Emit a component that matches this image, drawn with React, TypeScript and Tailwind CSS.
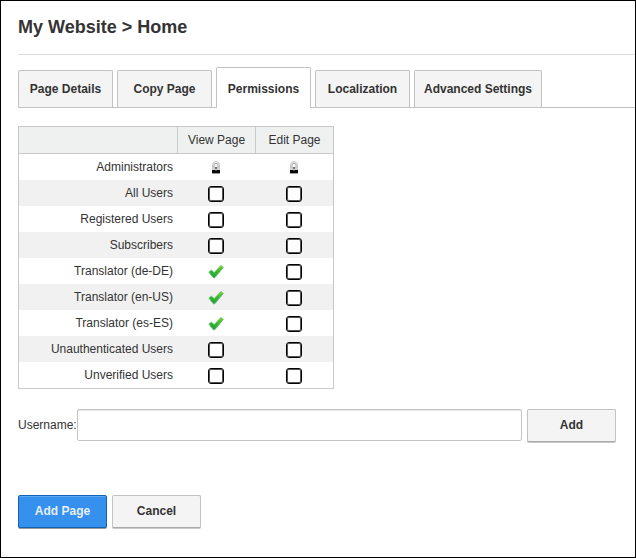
import { useState } from "react";

type Access = "locked" | "granted" | "open";

const tabs = ["Page Details", "Copy Page", "Permissions", "Localization", "Advanced Settings"];

const roles: { name: string; view: Access; edit: Access }[] = [
  { name: "Administrators", view: "locked", edit: "locked" },
  { name: "All Users", view: "open", edit: "open" },
  { name: "Registered Users", view: "open", edit: "open" },
  { name: "Subscribers", view: "open", edit: "open" },
  { name: "Translator (de-DE)", view: "granted", edit: "open" },
  { name: "Translator (en-US)", view: "granted", edit: "open" },
  { name: "Translator (es-ES)", view: "granted", edit: "open" },
  { name: "Unauthenticated Users", view: "open", edit: "open" },
  { name: "Unverified Users", view: "open", edit: "open" },
];

function LockIcon() {
  return (
    <svg role="img" aria-label="Locked" className="h-4 w-4" viewBox="0 0 16 16">
      <path d="M4.5 9V4.4Q5 1.6 8 1.6T11.5 4.4V9Z" fill="#e9e9e9" stroke="#c2c2c2" strokeWidth="0.8" />
      <path d="M6 8V5Q6.2 3.4 8 3.4T10 5V8Z" fill="#fff" stroke="#8d8d8d" strokeWidth="0.7" />
      <rect x="4" y="8" width="8" height="2" fill="#d0d0d0" />
      <rect x="7" y="7" width="2" height="2" fill="#777" />
      <rect x="4" y="10" width="8" height="3" fill="#080808" />
      <rect x="7.5" y="10" width="1" height="1" fill="#777" />
      <rect x="4" y="13" width="8" height="1" fill="#999" />
    </svg>
  );
}

function CheckIcon() {
  return (
    <svg role="img" aria-label="Granted" className="h-4 w-4" viewBox="0 0 16 16">
      <defs>
        <linearGradient id="tick" x1="1" y1="0" x2="0.2" y2="1">
          <stop offset="0" stopColor="#86dc2e" />
          <stop offset="0.45" stopColor="#3cba2c" />
          <stop offset="1" stopColor="#18a53a" />
        </linearGradient>
      </defs>
      <path
        d="M0.7 8 3.4 6 6.2 8.4 13 1.2 15.4 3.2 6.8 13.6 5.4 13.6Z"
        fill="url(#tick)"
        stroke="#7fd07c"
        strokeWidth="0.7"
        strokeLinejoin="round"
      />
      <path d="M2 10 5.4 13.8 6.8 13.8 15.2 3.6" fill="none" stroke="#3d8a48" strokeWidth="0.7" opacity="0.7" />
    </svg>
  );
}

function AccessCell({ access, label }: { access: Access; label: string }) {
  return (
    <td className="p-0">
      <div className="flex h-[26px] items-center justify-center pt-0.5">
        {access === "locked" && <LockIcon />}
        {access === "granted" && <CheckIcon />}
        {access === "open" && (
          <input
            type="checkbox"
            aria-label={label}
            className="h-4 w-4 appearance-none rounded-[3px] border border-black bg-white shadow-[inset_0_0_0_1px_#555] checked:bg-black"
          />
        )}
      </div>
    </td>
  );
}

const button = "h-[33px] w-[89px] shrink-0 rounded-[2px] border pb-0.5 text-center font-bold";
const plainButton = "border-[#c2c2c2] border-b-[#aaa] bg-[#f4f4f4] shadow-[0_1px_0_#c8c8c8]";

export default function App() {
  const [active, setActive] = useState("Permissions");

  return (
    <main className="min-h-screen border border-black bg-white pl-[17px] font-['Liberation_Sans',Arial,sans-serif] text-[12px] leading-4 text-[#333]">
      <h1 className="border-b border-[#ddd] pt-3.5 pb-3.5 text-[18px] leading-[25px] font-bold">
        My Website &gt; Home
      </h1>

      <div role="tablist" className="mt-3 flex items-end gap-1 border-b border-[#c2c2c2]">
        {tabs.map((tab) => (
          <button
            key={tab}
            type="button"
            role="tab"
            aria-selected={tab === active}
            onClick={() => setActive(tab)}
            className={`min-w-[95px] rounded-t-[2px] border border-b-0 border-[#c2c2c2] px-[9px] font-bold whitespace-nowrap ${
              tab === active ? "-mb-px h-[41px] bg-white pt-0.5" : "h-[37px] bg-[#f4f4f4]"
            }`}
          >
            {tab}
          </button>
        ))}
      </div>

      <div className="pr-[19px]">
        <table className="mt-[18px] w-[316px] table-fixed border-separate border-spacing-0 border border-[#c9c9c9]">
          <thead>
            <tr className="h-[27px] bg-[#eff1f1]">
              <th className="w-[158px] border-b border-[#c9c9c9] p-0"></th>
              <th scope="col" className="border-b border-l border-[#c9c9c9] p-0 font-normal">View Page</th>
              <th scope="col" className="border-b border-l border-[#c9c9c9] p-0 font-normal">Edit Page</th>
            </tr>
          </thead>
          <tbody>
            {roles.map((role) => (
              <tr key={role.name} className="even:bg-[#f1f1f1]">
                <th scope="row" className="p-0 pr-1 text-right font-normal">{role.name}</th>
                <AccessCell access={role.view} label={`View Page: ${role.name}`} />
                <AccessCell access={role.edit} label={`Edit Page: ${role.name}`} />
              </tr>
            ))}
          </tbody>
        </table>

        <div className="mt-5 flex items-start">
          <label htmlFor="username" className="w-[59px] shrink-0 pt-2">Username:</label>
          <input
            id="username"
            type="text"
            className="mr-[5px] h-8 min-w-0 flex-1 rounded-[2px] border border-[#c4c4c4] bg-white px-2 shadow-[inset_0_1px_1px_#e8e8e8]"
          />
          <button type="button" className={`${button} ${plainButton}`}>Add</button>
        </div>

        <div className="mt-[53px] flex gap-[5px]">
          <button
            type="submit"
            className={`${button} border-[#1263b0] bg-[#3691ee] text-[#e6effa] shadow-[0_1px_0_#999,inset_0_1px_0_#5ca9f4]`}
          >
            Add Page
          </button>
          <button type="button" className={`${button} ${plainButton}`}>Cancel</button>
        </div>
      </div>
    </main>
  );
}
